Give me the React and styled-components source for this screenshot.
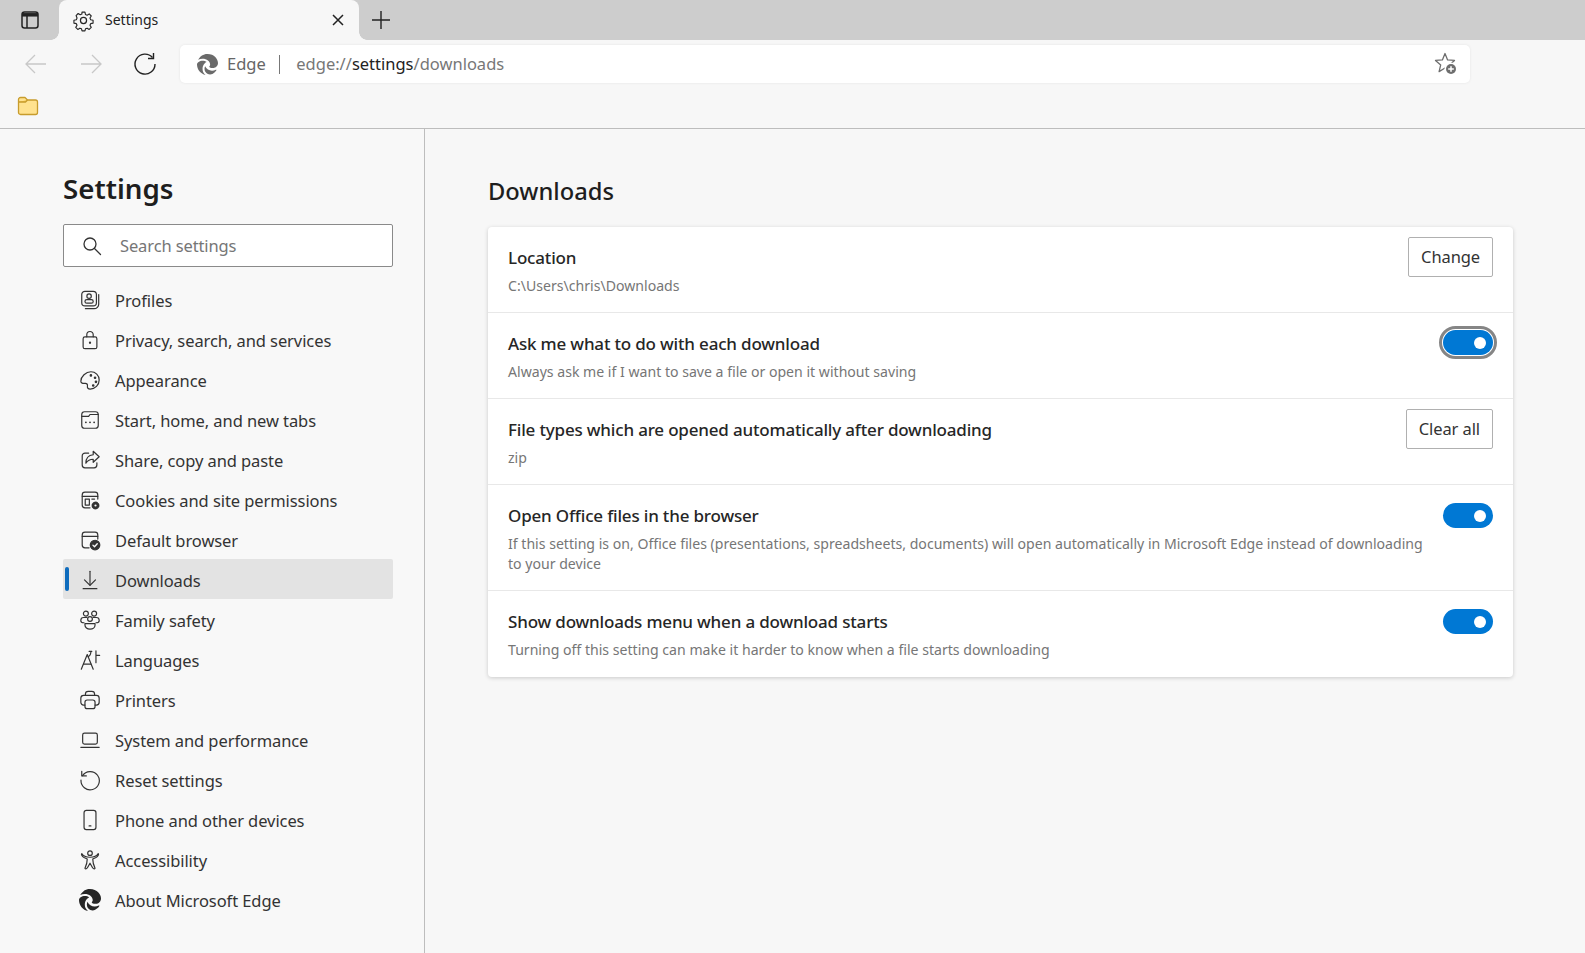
import React from 'react';
import styled, { createGlobalStyle } from 'styled-components';
import { FaEdge } from 'react-icons/fa6';

const GlobalStyle = createGlobalStyle`
  html, body { margin: 0; padding: 0; height: 100%; overflow: hidden; background: #f7f7f7; }
  #root { height: 100%; }
  * { box-sizing: border-box; }
`;

const Icon = ({ size = 24, children }) => (
  <svg width={size} height={size} viewBox="0 0 24 24" fill="none" stroke="currentColor" strokeWidth="1.3" strokeLinecap="round" strokeLinejoin="round">
    {children}
  </svg>
);

const icons = {
  profiles: (
    <>
      <rect x="3" y="2.500" width="16" height="16" rx="3.500" />
      <circle cx="11" cy="7.800" r="2.400" />
      <rect x="6.500" y="11.500" width="9" height="4" rx="2" />
      <path d="M21.500 6v10.500a5 5 0 0 1-5 5H7" />
    </>
  ),
  lock: (
    <>
      <rect x="4.500" y="8.500" width="15" height="13" rx="2" />
      <path d="M8.500 8.500V6.200a3.500 3.500 0 0 1 7 0v2.300" />
      <circle cx="12" cy="15" r=".6" fill="currentColor" />
    </>
  ),
  palette: (
    <>
      <path d="M13 3c5 0 9 3.800 9 8.900 0 5.600-4.400 10-9.800 10-2.200 0-3.400-1.400-3-3.200.4-1.900-.6-3.300-2.800-3-2.100.3-4.400-.2-4.400-2.400C2 8.400 7.500 3 13 3z" />
      <circle cx="13" cy="7" r=".8" fill="currentColor" />
      <circle cx="17.500" cy="9.500" r=".8" fill="currentColor" />
      <circle cx="18.500" cy="14" r=".8" fill="currentColor" />
      <circle cx="15.500" cy="18" r=".8" fill="currentColor" />
    </>
  ),
  start: (
    <>
      <rect x="3" y="3" width="18" height="18" rx="3" />
      <path d="M3 8h7.500l1.500-2h9" />
      <path d="M7.500 14.500h.01M12 14.500h.01M16.500 14.500h.01" strokeWidth="2" />
    </>
  ),
  share: (
    <>
      <path d="M10.500 4.500h-4a3 3 0 0 0-3 3v10a3 3 0 0 0 3 3h10a3 3 0 0 0 3-3V15" />
      <path d="M15.500 2.500 22 8.500l-6.500 6v-3.300c-3.500 0-6 1.300-8 4.300 0-5.500 3-8.700 8-9.200z" />
    </>
  ),
  cookies: (
    <>
      <path d="M12 20.500H6.500a3 3 0 0 1-3-3v-11a3 3 0 0 1 3-3h11a3 3 0 0 1 3 3V11" />
      <path d="M3.500 8h17" />
      <rect x="6.800" y="11" width="4.500" height="6.500" />
      <path d="M14 11h3" />
      <circle cx="18" cy="18" r="3.400" fill="currentColor" stroke="currentColor" strokeWidth="1.800" strokeDasharray="1.600 1.070" />
      <circle cx="18" cy="18" r="1.200" fill="#f8f8f8" stroke="none" />
    </>
  ),
  browser: (
    <>
      <path d="M11 20.500H6.500a3 3 0 0 1-3-3v-11a3 3 0 0 1 3-3h11a3 3 0 0 1 3 3V11" />
      <path d="M3.500 8h17" />
      <circle cx="17.500" cy="17.500" r="5.200" fill="currentColor" />
      <path d="m15.200 17.600 1.700 1.700 3-3.200" stroke="#f8f8f8" strokeWidth="1.500" />
    </>
  ),
  download: (
    <>
      <path d="M12 2.500v15" />
      <path d="m6 11.800 6 6 6-6" />
      <path d="M4.500 21.500h15" />
    </>
  ),
  family: (
    <>
      <circle cx="7.500" cy="5" r="2.700" />
      <circle cx="16.500" cy="5" r="2.700" />
      <circle cx="12" cy="11" r="2.600" />
      <path d="M8.500 9.300H5a3 3 0 0 0-3 3v.4c0 1.300 1.400 2.300 3.500 2.300M15.500 9.300H19a3 3 0 0 1 3 3v.4c0 1.300-1.400 2.300-3.500 2.300" />
      <path d="M6.500 16h11v1.500c0 2.600-2.400 4.500-5.500 4.500s-5.500-1.900-5.500-4.500z" />
    </>
  ),
  languages: (
    <>
      <path d="M2.500 22 9 6l6.500 16" />
      <path d="M5 16.500h8" />
      <path d="M11 2.500h3M13 2.500c0 3-1 5-3 6" />
      <path d="M18.500 2v13M18.500 7h4" />
    </>
  ),
  printer: (
    <>
      <path d="M7 7V5.500a3 3 0 0 1 3-3h4a3 3 0 0 1 3 3V7" />
      <path d="M6.500 17.500H5a3 3 0 0 1-3-3V10a3 3 0 0 1 3-3h14a3 3 0 0 1 3 3v4.500a3 3 0 0 1-3 3h-1.500" />
      <rect x="6.500" y="12" width="11" height="9.500" rx="2.500" />
    </>
  ),
  laptop: (
    <>
      <rect x="4" y="4.500" width="16" height="12" rx="2" />
      <path d="M2 20h20" />
    </>
  ),
  reset: (
    <>
      <path d="M3.800 7.300A10 10 0 1 1 2.200 12" />
      <path d="M3 2.500v5h5" />
    </>
  ),
  phone: (
    <>
      <rect x="5.500" y="1.500" width="13" height="21" rx="2.500" />
      <path d="M11 18.500h2" />
    </>
  ),
  accessibility: (
    <>
      <circle cx="12" cy="4.500" r="2.500" />
      <path d="M3 5c1 1.800 4.500 4 9 4s8-2.200 9-4c.9 1-.4 3-2.500 4.200L15 11c0 3.500 1 7 2.500 10-.6 1.200-2.200.6-3-1L12 15.500 9.500 20c-.8 1.600-2.400 2.200-3 1C8 18 9 14.500 9 11L5.500 9.200C3.400 8 2.100 6 3 5z" />
    </>
  ),
};

const navItems = [
  ['profiles', 'Profiles'],
  ['lock', 'Privacy, search, and services'],
  ['palette', 'Appearance'],
  ['start', 'Start, home, and new tabs'],
  ['share', 'Share, copy and paste'],
  ['cookies', 'Cookies and site permissions'],
  ['browser', 'Default browser'],
  ['download', 'Downloads'],
  ['family', 'Family safety'],
  ['languages', 'Languages'],
  ['printer', 'Printers'],
  ['laptop', 'System and performance'],
  ['reset', 'Reset settings'],
  ['phone', 'Phone and other devices'],
  ['accessibility', 'Accessibility'],
  ['edge', 'About Microsoft Edge'],
];

const App = () => (
  <Page>
    <GlobalStyle />
    <TabStrip>
      <TabAction>
        <svg width="22" height="22" viewBox="0 0 22 22" fill="none" stroke="#222" strokeWidth="1.500">
          <rect x="3" y="3" width="16" height="16" rx="2.500" />
          <path d="M3 5.800h16" strokeWidth="3.500" />
          <path d="M8 6v13" />
        </svg>
      </TabAction>
      <Tab>
        <Icon size={23}>
          <path d="M10.300 2.500h3.400l.6 2.800 1.900.8 2.400-1.500 2.400 2.400-1.500 2.400.8 1.900 2.800.6v3.400l-2.800.6-.8 1.900 1.500 2.400-2.400 2.400-2.400-1.500-1.900.8-.6 2.400h-3.400l-.6-2.400-1.900-.8-2.400 1.500-2.400-2.400 1.500-2.400-.8-1.900-2.800-.6v-3.400l2.800-.6.8-1.900L3.400 6.500l2.400-2.400 2.400 1.500 1.900-.8z" transform="translate(1.200 1) scale(.9)" />
          <circle cx="12" cy="12" r="3.200" />
        </Icon>
        <TabTitle>Settings</TabTitle>
        <svg width="14" height="14" viewBox="0 0 14 14" stroke="#222" strokeWidth="1.500">
          <path d="M2 2l10 10M12 2 2 12" />
        </svg>
      </Tab>
      <NewTab>
        <svg width="20" height="20" viewBox="0 0 20 20" stroke="#222" strokeWidth="1.400">
          <path d="M10 1v18M1 10h18" />
        </svg>
      </NewTab>
    </TabStrip>

    <Toolbar>
      <NavButton>
        <svg width="24" height="24" viewBox="0 0 24 24" fill="none" stroke="#c8c8c8" strokeWidth="1.300">
          <path d="M22 12H2M11 3l-9 9 9 9" />
        </svg>
      </NavButton>
      <NavButton>
        <svg width="24" height="24" viewBox="0 0 24 24" fill="none" stroke="#c8c8c8" strokeWidth="1.300">
          <path d="M2 12h20M13 3l9 9-9 9" />
        </svg>
      </NavButton>
      <NavButton>
        <svg width="24" height="24" viewBox="0 0 24 24" fill="none" stroke="#222" strokeWidth="1.400">
          <path d="M19.500 5.500A10 10 0 1 0 22 12" />
          <path d="M20.500 1v5.500H15" />
        </svg>
      </NavButton>
      <AddressBar>
        <FaEdge size={21} color="#6a6a6a" />
        <AddressLabel>Edge</AddressLabel>
        <AddressDivider />
        <Url>
          edge://<strong>settings</strong>/downloads
        </Url>
        <FavButton>
          <svg width="24" height="24" viewBox="0 0 24 24" fill="none" stroke="#6e6e6e" strokeWidth="1.300" strokeLinejoin="round">
            <path d="M11 1.500 13.600 7.900 20.500 8.400 15.300 12.900 16.900 19.600 11 16 5.100 19.600 6.700 12.900 1.500 8.400 8.400 7.900z" />
            <circle cx="17" cy="17" r="6.500" fill="#fff" stroke="none" />
            <circle cx="17" cy="17" r="5" fill="#6e6e6e" stroke="none" />
            <path d="M17 14.200v5.600M14.200 17h5.600" stroke="#fff" strokeWidth="1.500" />
          </svg>
        </FavButton>
      </AddressBar>
    </Toolbar>

    <BookmarkBar>
      <svg width="22" height="20" viewBox="0 0 22 20" fill="#ffe28f" stroke="#c79c2d" strokeWidth="1.300" strokeLinejoin="round">
        <path d="M1.500 3.500a2 2 0 0 1 2-2h4.500l2.500 2.500h8a2 2 0 0 1 2 2v10.500a2 2 0 0 1-2 2h-15a2 2 0 0 1-2-2z" />
        <path d="M1.500 6h7l2-2" fill="#f3c44d" />
      </svg>
    </BookmarkBar>

    <Body>
      <Sidebar>
        <SideTitle>Settings</SideTitle>
        <SearchBox>
          <svg width="20" height="20" viewBox="0 0 20 20" fill="none" stroke="#333" strokeWidth="1.300" strokeLinecap="round">
            <circle cx="8" cy="8" r="6" />
            <path d="m12.500 12.500 6 6" />
          </svg>
          <SearchHint>Search settings</SearchHint>
        </SearchBox>
        <NavList>
          {navItems.map(([key, label]) => (
            <NavItem key={key} $active={key === 'download'}>
              <NavIcon>
                {key === 'edge' ? <FaEdge size={22} color="#262626" /> : <Icon>{icons[key]}</Icon>}
              </NavIcon>
              {label}
            </NavItem>
          ))}
        </NavList>
      </Sidebar>

      <Main>
        <Heading>Downloads</Heading>
        <Card>
          <Row>
            <RowText>
              <RowTitle>Location</RowTitle>
              <RowDesc>C:\Users\chris\Downloads</RowDesc>
            </RowText>
            <Button>Change</Button>
          </Row>
          <Row>
            <RowText>
              <RowTitle>Ask me what to do with each download</RowTitle>
              <RowDesc>Always ask me if I want to save a file or open it without saving</RowDesc>
            </RowText>
            <Toggle $focused />
          </Row>
          <Row>
            <RowText>
              <RowTitle>File types which are opened automatically after downloading</RowTitle>
              <RowDesc>zip</RowDesc>
            </RowText>
            <Button>Clear all</Button>
          </Row>
          <Row>
            <RowText>
              <RowTitle>Open Office files in the browser</RowTitle>
              <RowDesc>
                If this setting is on, Office files (presentations, spreadsheets, documents) will open automatically in Microsoft Edge instead of downloading to your device
              </RowDesc>
            </RowText>
            <Toggle />
          </Row>
          <Row>
            <RowText>
              <RowTitle>Show downloads menu when a download starts</RowTitle>
              <RowDesc>Turning off this setting can make it harder to know when a file starts downloading</RowDesc>
            </RowText>
            <Toggle />
          </Row>
        </Card>
      </Main>
    </Body>
  </Page>
);

export default App;

const font = `'Noto Sans', 'Open Sans', sans-serif`;

const Page = styled.div`
  height: 100vh;
  display: flex;
  flex-direction: column;
  font-family: ${font};
  color: #262626;
  background: #f7f7f7;
`;

const TabStrip = styled.div`
  height: 40px;
  flex: none;
  display: flex;
  align-items: stretch;
  background: #cdcdcd;
`;

const TabAction = styled.div`
  width: 59px;
  display: flex;
  align-items: center;
  justify-content: center;
`;

const Tab = styled.div`
  position: relative;
  width: 300px;
  display: flex;
  align-items: center;
  padding: 0 14px 0 13px;
  background: #f7f7f7;
  border-radius: 8px 8px 0 0;

  &::before,
  &::after {
    content: '';
    position: absolute;
    bottom: 0;
    width: 8px;
    height: 8px;
  }

  &::before {
    left: -8px;
    background: radial-gradient(circle at 0 0, #cdcdcd 7.500px, #f7f7f7 8px);
  }

  &::after {
    right: -8px;
    background: radial-gradient(circle at 100% 0, #cdcdcd 7.500px, #f7f7f7 8px);
  }
`;

const TabTitle = styled.span`
  flex: 1;
  margin: 0 0 2px 10px;
  font-size: 14px;
  color: #222;
`;

const NewTab = styled.div`
  width: 44px;
  display: flex;
  align-items: center;
  justify-content: center;
`;

const Toolbar = styled.div`
  height: 48px;
  flex: none;
  display: flex;
  align-items: center;
  padding-left: 9px;
`;

const NavButton = styled.div`
  width: 54.500px;
  display: flex;
  justify-content: center;
`;

const AddressBar = styled.div`
  width: 1290px;
  height: 38px;
  margin-left: 7.500px;
  display: flex;
  align-items: center;
  padding: 0 12px 0 17px;
  background: #fff;
  border-radius: 5px;
  box-shadow: 0 0 3px rgba(0, 0, 0, 0.08);
`;

const AddressLabel = styled.span`
  margin: 0 0 2px 9px;
  font-size: 16.500px;
  color: #666;
`;

const AddressDivider = styled.span`
  width: 1.500px;
  height: 19px;
  margin: 0 16px 0 13px;
  background: #777;
`;

const Url = styled.span`
  flex: 1;
  margin-bottom: 2px;
  font-size: 16.500px;
  color: #777;

  strong {
    font-weight: 400;
    color: #222;
  }
`;

const FavButton = styled.div`
  display: flex;
`;

const BookmarkBar = styled.div`
  height: 41px;
  flex: none;
  display: flex;
  align-items: center;
  padding: 0 0 4px 17px;
  border-bottom: 1px solid #bdbdbd;
`;

const Body = styled.div`
  flex: 1;
  min-height: 0;
  display: flex;
`;

const Sidebar = styled.aside`
  width: 425px;
  flex: none;
  padding: 40px 31px 0 63px;
  background: #f8f8f8;
  border-right: 1px solid #bdbdbd;
`;

const SideTitle = styled.h1`
  margin: 0;
  height: 40px;
  line-height: 38px;
  font-size: 27.700px;
  font-weight: 600;
  color: #1e1e1e;
`;

const SearchBox = styled.div`
  height: 43px;
  margin-top: 15px;
  display: flex;
  align-items: center;
  padding-left: 18px;
  background: #fff;
  border: 1px solid #8a8a8a;
  border-radius: 2px;
`;

const SearchHint = styled.span`
  margin-left: 18px;
  font-size: 16.500px;
  letter-spacing: -0.12px;
  color: #767676;
`;

const NavList = styled.nav`
  margin-top: 12px;
  display: flex;
  flex-direction: column;
`;

const NavItem = styled.div`
  position: relative;
  height: 40px;
  display: flex;
  align-items: center;
  padding: 2px 0 0 16px;
  font-size: 16.500px;
  letter-spacing: -0.08px;
  color: #333;
  border-radius: 2px;
  background: ${(p) => (p.$active ? '#e3e3e3' : 'transparent')};

  &::before {
    content: '';
    display: ${(p) => (p.$active ? 'block' : 'none')};
    position: absolute;
    left: 2px;
    top: 8px;
    bottom: 8px;
    width: 4px;
    border-radius: 2px;
    background: #0f6cbd;
  }
`;

const NavIcon = styled.span`
  width: 22px;
  height: 24px;
  margin-right: 14px;
  display: flex;
  align-items: center;
  justify-content: center;
  color: #333;
`;

const Main = styled.main`
  flex: 1;
  min-width: 0;
  padding: 42px 72px 0 63px;
`;

const Heading = styled.h2`
  margin: 0;
  height: 40px;
  line-height: 40px;
  font-size: 23.700px;
  font-weight: 500;
  color: #1e1e1e;
`;

const Card = styled.section`
  margin-top: 16px;
  background: #fff;
  border-radius: 4px;
  box-shadow: 0 1px 4px rgba(0, 0, 0, 0.18);
`;

const Row = styled.div`
  display: flex;
  align-items: flex-start;
  justify-content: space-between;
  gap: 20px;
  padding: 10px 20px 16px;
  border-bottom: 1px solid #e8e8e8;

  &:last-child {
    padding-bottom: 17px;
    border-bottom: none;
  }
`;

const RowText = styled.div`
  flex: 1;
  min-width: 0;
  padding-top: 9px;
`;

const RowTitle = styled.div`
  font-size: 17px;
  line-height: 24px;
  font-weight: 500;
  letter-spacing: -0.18px;
  color: #262626;
`;

const RowDesc = styled.div`
  margin-top: 6px;
  font-size: 14.100px;
  line-height: 20px;
  color: #767676;
`;

const Button = styled.button`
  height: 40px;
  padding: 0 12px 2px;
  flex: none;
  font-family: ${font};
  font-size: 16.500px;
  letter-spacing: -0.1px;
  color: #333;
  background: #fff;
  border: 1px solid #b0b0b0;
  border-radius: 2px;
`;

const Toggle = styled.div`
  position: relative;
  width: 50px;
  height: 25px;
  flex: none;
  margin-top: ${(p) => (p.$focused ? '7px' : '8px')};
  border-radius: 13px;
  background: #0078d4;
  outline: ${(p) => (p.$focused ? '3px solid #858585' : 'none')};
  outline-offset: 1px;

  &::after {
    content: '';
    position: absolute;
    right: 7px;
    top: 6.500px;
    width: 12px;
    height: 12px;
    border-radius: 50%;
    background: #fff;
  }
`;
